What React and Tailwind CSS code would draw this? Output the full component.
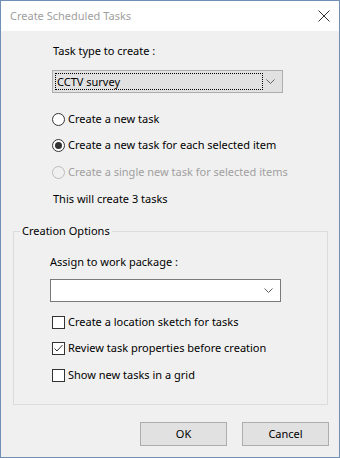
import React from 'react';

const Chevron = () => (
    <svg width="9" height="5" viewBox="0 0 9 5" className="shrink-0">
        <path d="M0.5 0.5 L4.5 4.5 L8.5 0.5" fill="none" stroke="#606060" strokeWidth="1" />
    </svg>
);

const Radio = ({ checked, disabled, label }) => (
    <div className="flex items-center h-[16px]">
        <span
            className={`w-[13px] h-[13px] rounded-full border flex items-center justify-center ${
                disabled ? 'border-[#bcbcbc] bg-[#f0f0f0]' : 'border-[#333333] bg-white'
            }`}
        >
            {checked && <span className="w-[7px] h-[7px] rounded-full bg-[#333333]" />}
        </span>
        <span className={`ml-[3px] ${disabled ? 'text-[#a0a0a0]' : 'text-black'}`}>{label}</span>
    </div>
);

const Checkbox = ({ checked, label }) => (
    <div className="flex items-center h-[16px]">
        <span className="w-[13px] h-[13px] border border-[#333333] bg-white flex items-center justify-center">
            {checked && (
                <svg width="11" height="11" viewBox="0 0 11 11">
                    <path d="M1.5 5.5 L4 8 L9.5 2" fill="none" stroke="#333333" strokeWidth="1" />
                </svg>
            )}
        </span>
        <span className="ml-[3px]">{label}</span>
    </div>
);

const App = () => {
    return (
        <div
            className="w-[340px] h-[458px] border border-[#6f90b4] flex flex-col text-[11px] leading-[16px] text-black"
            style={{ fontFamily: '"Noto Sans", "Open Sans", sans-serif' }}
        >
            {/* title bar */}
            <div className="h-[30px] bg-white flex items-center justify-between pl-[9px] pr-[9px]">
                <span className="text-[#a0a0a0] text-[11px]">Create Scheduled Tasks</span>
                <svg width="12" height="12" viewBox="0 0 12 12">
                    <path d="M0.5 0.5 L11.5 11.5 M11.5 0.5 L0.5 11.5" stroke="#333333" strokeWidth="1" />
                </svg>
            </div>

            <div className="flex-1 bg-[#f0f0f0] flex flex-col">
                <div className="pl-[51px] flex flex-col">
                    <div className="mt-[12px] pl-[1px]">Task type to create :</div>
                    <div className="mt-[11px] w-[231px] h-[23px] border border-[#adadad] bg-[#e1e1e1] flex items-center pl-[2px] pr-[7px]">
                        <div className="w-[208px] h-[17px] border border-dotted border-black flex items-center pl-[1px]">
                            CCTV survey
                        </div>
                        <div className="flex-1" />
                        <Chevron />
                    </div>

                    <div className="mt-[18px] flex flex-col">
                        <Radio label="Create a new task" />
                        <div className="mt-[10px]">
                            <Radio checked label="Create a new task for each selected item" />
                        </div>
                        <div className="mt-[11px]">
                            <Radio disabled label="Create a single new task for selected items" />
                        </div>
                    </div>
                    <div className="mt-[11px] pl-[1px]">This will create 3 tasks</div>
                </div>

                {/* group box */}
                <div className="relative mt-[24px] ml-[12px] mr-[11px] h-[174px] border border-[#dcdcdc] pl-[36px]">
                    <span className="absolute -top-[9px] left-[6px] px-[2px] bg-[#f0f0f0]">Creation Options</span>
                    <div className="mt-[22px]">Assign to work package :</div>
                    <div className="mt-[9px] w-[231px] h-[23px] border border-[#7a7a7a] bg-white flex items-center justify-end pr-[7px]">
                        <Chevron />
                    </div>
                    <div className="mt-[12px] pl-[2px] flex flex-col">
                        <Checkbox label="Create a location sketch for tasks" />
                        <div className="mt-[10px]">
                            <Checkbox checked label="Review task properties before creation" />
                        </div>
                        <div className="mt-[11px]">
                            <Checkbox label="Show new tasks in a grid" />
                        </div>
                    </div>
                </div>

                <div className="mt-[17px] flex justify-end gap-[15px] pr-[10px]">
                    <button className="w-[87px] h-[24px] border border-[#adadad] bg-[#e1e1e1]">OK</button>
                    <button className="w-[87px] h-[24px] border border-[#adadad] bg-[#e1e1e1]">Cancel</button>
                </div>
            </div>
        </div>
    );
};

export default App;
